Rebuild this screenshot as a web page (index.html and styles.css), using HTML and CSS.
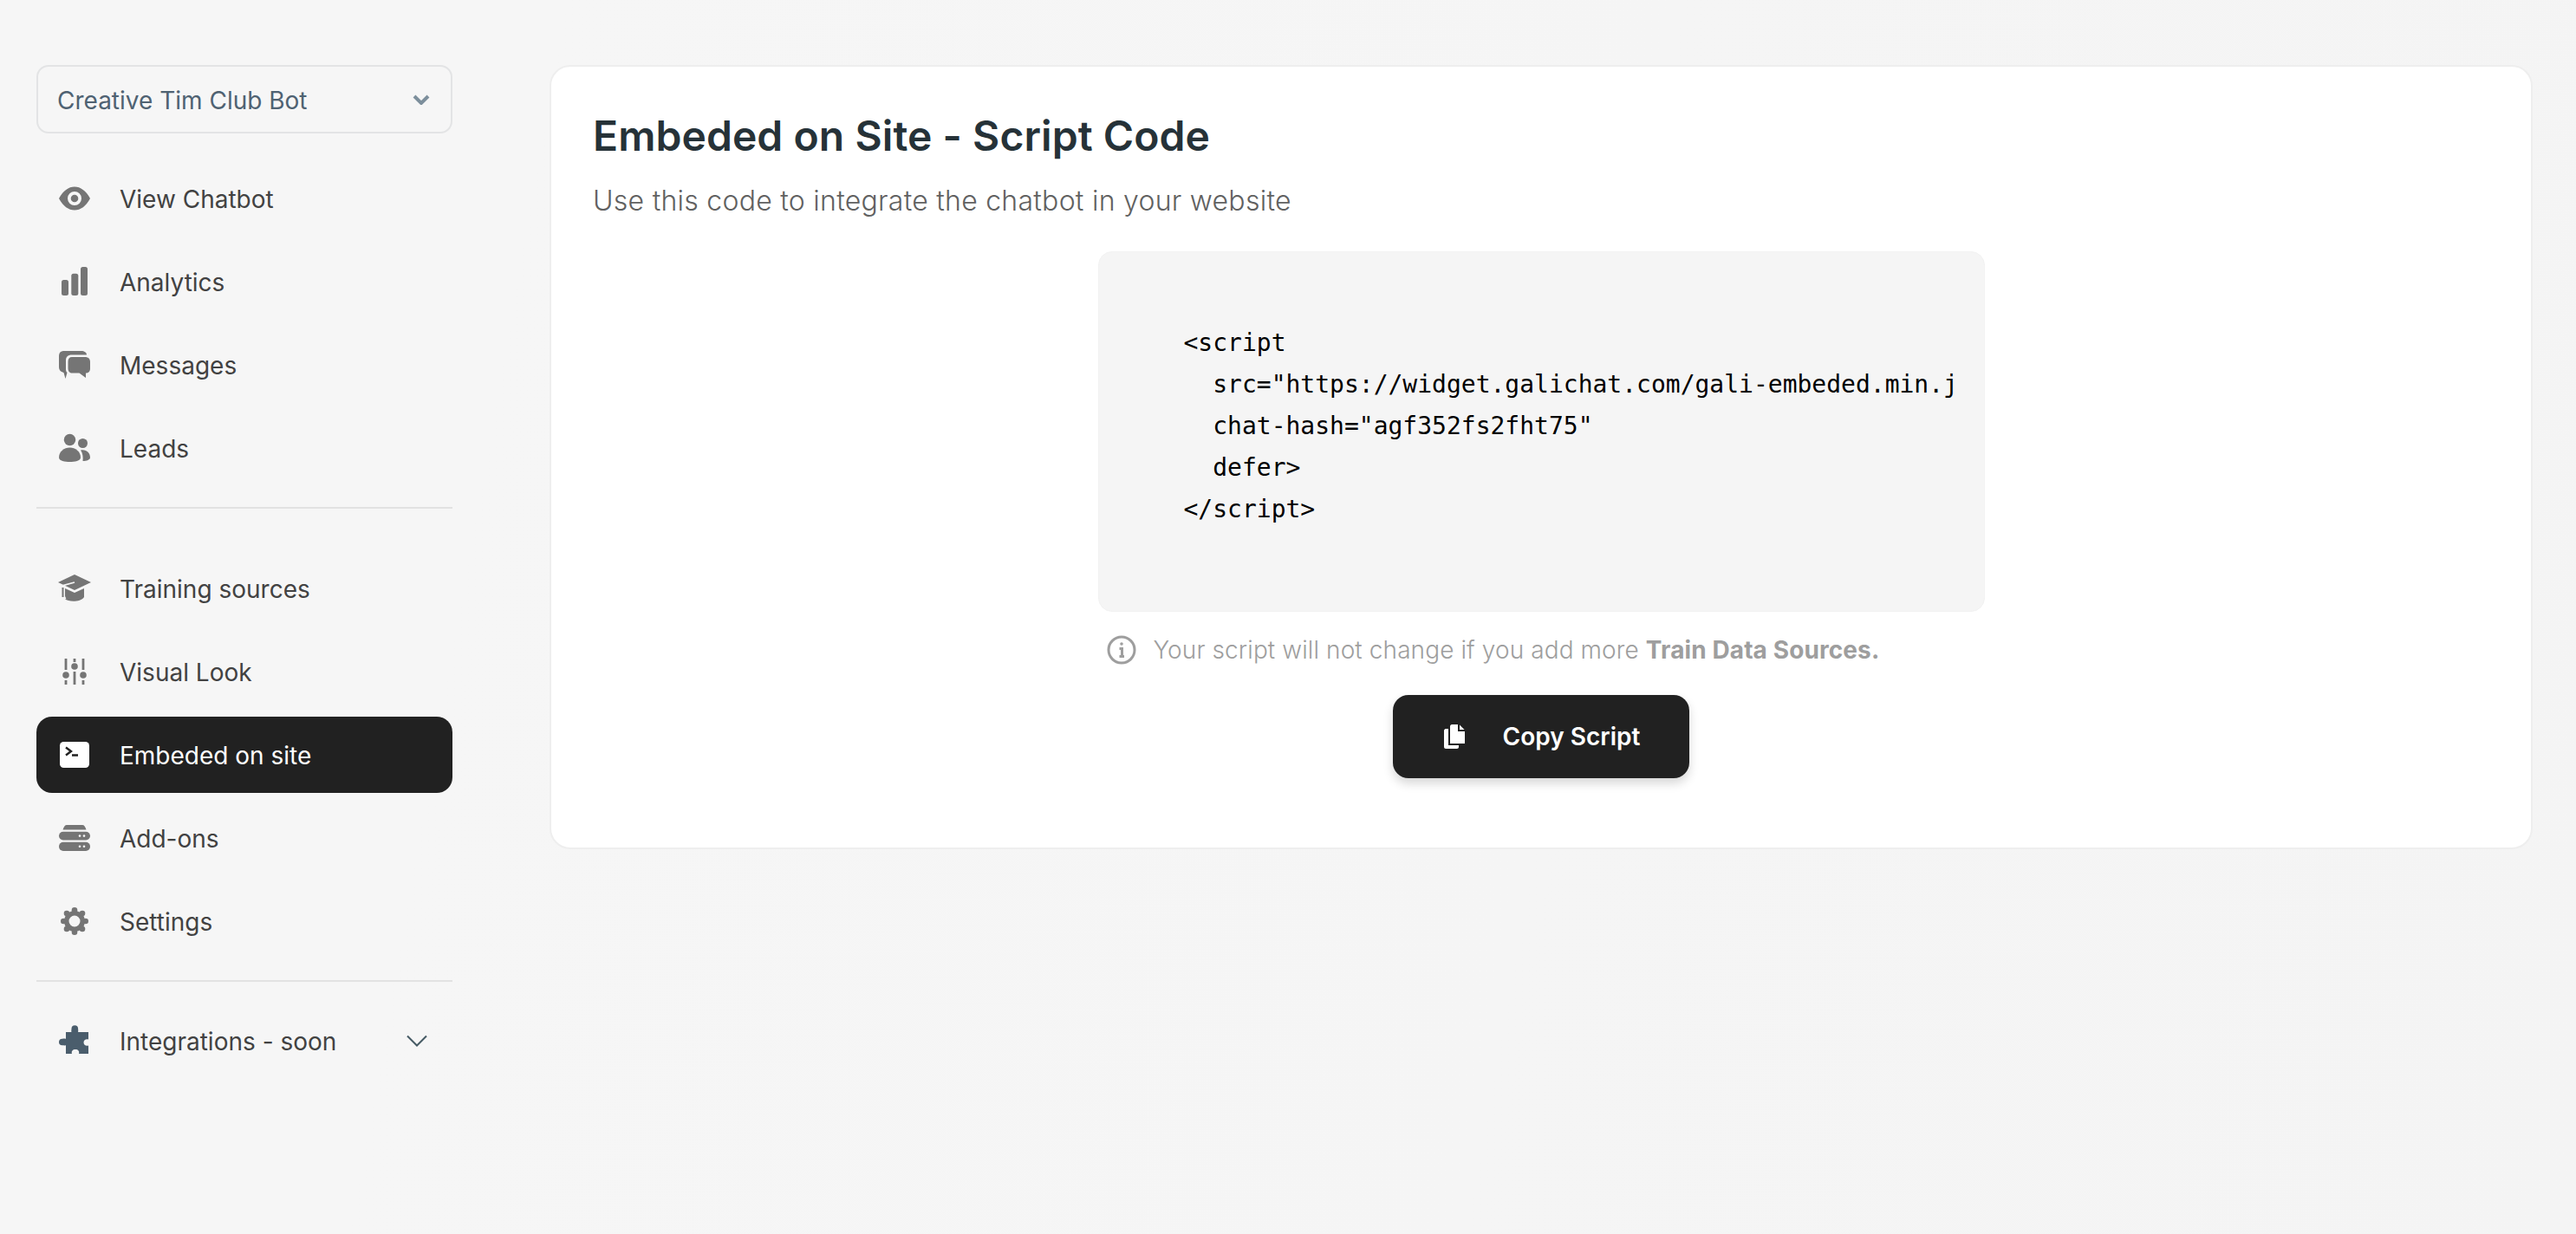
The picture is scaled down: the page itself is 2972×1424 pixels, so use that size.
FILE: index.html
```html
<!DOCTYPE html>
<html lang="en">
<head>
<meta charset="utf-8">
<title>Embeded on Site</title>
<link rel="stylesheet" href="styles.css">
</head>
<body>
<div class="app">
  <aside class="sidebar">
    <div class="select">
      <span class="label">Creative Tim Club Bot</span>
      <svg class="select-chev" viewBox="0 0 20 12"><path d="M2 2l8 8 8-8"/></svg>
    </div>
    <nav class="nav nav-first">
      <a class="item"><svg class="icon" viewBox="0 0 36 36"><path fill-rule="evenodd" d="M0 18C5 9 11 4.500 18 4.500S31 9 36 18C31 27 25 31.500 18 31.500S5 27 0 18ZM18 10a8 8 0 1 0 0 16a8 8 0 1 0 0-16Z"/><circle cx="18" cy="18" r="4.300"/></svg><span class="label">View Chatbot</span></a>
      <a class="item"><svg class="icon" viewBox="0 0 36 36"><rect x="3" y="16" width="8" height="18" rx="2.500"/><rect x="14.300" y="8.700" width="8" height="25.300" rx="2.500"/><rect x="25" y="1" width="8" height="33" rx="2.500"/></svg><span class="label">Analytics</span></a>
      <a class="item"><svg class="icon" viewBox="0 0 36 36"><path d="M6 2H26C29 2 32 3.500 32 6.500H15C10 6.500 8 9 8 13V23C8 25 8.500 26 9.500 27L7.500 34L5.500 27C2 26 0 24 0 20V8C0 4 2 2 6 2Z"/><path d="M15 9H30C34 9 36 11 36 15V22C36 26 34 27.500 31 27.500L31 33L23.500 27.500H15C12 27.500 10.500 25 10.500 22V14C10.500 11 12 9 15 9Z"/></svg><span class="label">Messages</span></a>
      <a class="item"><svg class="icon" viewBox="0 0 36 36"><circle cx="12.500" cy="8.500" r="6.700"/><circle cx="27.500" cy="12.500" r="5.500"/><path d="M0 29C0 22 6 17.500 12.500 17.500S25 22 25 29C25 33 18 34 12.500 34S0 33 0 29Z"/><path d="M25 20.500C31 19 36 23 36 29C36 31.500 32 33 27.500 33C28 29 27.500 24 25 20.500Z"/></svg><span class="label">Leads</span></a>
    </nav>
    <hr class="rule">
    <nav class="nav nav-second">
      <a class="item"><svg class="icon" viewBox="0 0 36 36"><path d="M18 2L37 11L18 20L-1 11Z"/><path d="M7 18L18 23L29 18V28C25 34 11 34 7 30Z"/><path d="M3.500 15V26L1.500 29H7L5.500 26V14.500L18 11" fill="none" stroke="#f6f6f6" stroke-width="1.800"/><path d="M4.500 17V28" stroke="#757575" stroke-width="2" fill="none"/></svg><span class="label">Training sources</span></a>
      <a class="item"><svg class="icon" viewBox="0 0 36 36"><g class="lines"><path d="M8 3V16M8 28V33M18 3V7M18 18V33M28 3V16M28 28V33"/></g><circle cx="8" cy="22" r="3.800"/><circle cx="18" cy="12" r="3.800"/><circle cx="28" cy="22" r="3.800"/></svg><span class="label">Visual Look</span></a>
      <a class="item is-active"><svg class="icon" viewBox="0 0 36 36"><rect x="1" y="3" width="34" height="30" rx="4.500"/><path class="prompt" d="M8 9.500L14 14L8 18.500M15 18.500H22"/></svg><span class="label">Embeded on site</span></a>
      <a class="item"><svg class="icon" viewBox="0 0 36 36"><path d="M9 3H27C29 3 30.500 5 31.500 8.500H4.500C5.500 5 7 3 9 3Z"/><rect y="10.700" width="36" height="9.800" rx="4.900"/><rect y="22.700" width="36" height="10.300" rx="5"/><g class="dots"><circle cx="24" cy="15.600" r="1.300"/><circle cx="29" cy="15.600" r="1.300"/><circle cx="24" cy="27.800" r="1.300"/><circle cx="29" cy="27.800" r="1.300"/></g></svg><span class="label">Add-ons</span></a>
      <a class="item"><svg class="icon" viewBox="0 0 36 36"><path fill-rule="evenodd" d="M18 6a12 12 0 1 0 0 24a12 12 0 1 0 0-24ZM18 11.500a6.500 6.500 0 1 1 0 13a6.500 6.500 0 1 1 0-13Z"/><circle cx="18" cy="5.300" r="3.300"/><circle cx="27" cy="9" r="3.300"/><circle cx="30.700" cy="18" r="3.300"/><circle cx="27" cy="27" r="3.300"/><circle cx="18" cy="30.700" r="3.300"/><circle cx="9" cy="27" r="3.300"/><circle cx="5.300" cy="18" r="3.300"/><circle cx="9" cy="9" r="3.300"/></svg><span class="label">Settings</span></a>
    </nav>
    <hr class="rule">
    <a class="item item-soon"><svg class="icon icon-slate" viewBox="0 0 36 36"><path fill-rule="evenodd" d="M8 8H14.500C14 7 14.500 5.500 14.500 4a3.800 3.800 0 1 1 7.600 0C22.100 5.500 22.500 7 22 8H34V16.500C31 15.500 28.500 17.500 28.500 20S31 24.500 34 23.500V33H23C24 30 22 28 19 28S14 30 15 33H8V23C7 24 5.500 23.300 3.800 23.300a3.800 3.800 0 1 1 0-7.600C5.500 15.700 7 15 8 16Z"/></svg><span class="label">Integrations - soon</span><svg class="soon-chev" viewBox="0 0 24 14"><path d="M1 1.500L12 12.500L23 1.500"/></svg></a>
  </aside>
  <main class="card">
    <h1 class="title">Embeded on Site - Script Code</h1>
    <p class="subtitle">Use this code to integrate the chatbot in your website</p>
    <section class="center">
      <div class="codebox">
        <pre class="code">&lt;script
  src="https://widget.galichat.com/gali-embeded.min.js"
  chat-hash="agf352fs2fht75"
  defer&gt;
&lt;/script&gt;</pre>
      </div>
      <p class="note">
        <svg class="info" viewBox="0 0 34 34"><circle cx="17" cy="17" r="15"/><path d="M14.500 15.500H17.500V24.500M14.500 24.500H20"/><circle class="info-dot" cx="17" cy="10" r="1.800"/></svg>
        <span>Your script will not change if you add more <b>Train Data Sources.</b></span>
      </p>
      <button class="copy">
        <svg class="copy-icon" viewBox="0 0 24 28"><path d="M9 0H16V8H24V22H7V2C7 1 8 0 9 0Z"/><path d="M18 .5L23.500 6H18Z"/><path d="M0 7C0 6 1 5 2 5H5V24H17V26C17 27 16 28 15 28H2C1 28 0 27 0 26Z"/></svg>
        <span>Copy Script</span>
      </button>
    </section>
  </main>
</div>
</body>
</html>
```

FILE: styles.css
```css
* { box-sizing: border-box; }
html, body { margin: 0; padding: 0; }
body {
  background: linear-gradient(100deg, #f6f6f6 0%, #f6f6f6 20%, #f4f4f4 100%);
  font-family: Inter, "Noto Sans", sans-serif;
  width: 2972px;
  height: 1424px;
  overflow: hidden;
}
.app {
  display: flex;
  align-items: flex-start;
  padding: 75px 50px 0 42px;
  gap: 112px;
}
.sidebar { width: 480px; flex: none; }
.label { padding-top: 2px; }
.select {
  height: 79px;
  border: 2px solid #e3e4e5;
  border-radius: 14px;
  padding: 0 24px 0 22px;
  display: flex;
  align-items: center;
  justify-content: space-between;
  font-size: 28px;
  color: #4f6272;
}
.select-chev { width: 20px; height: 12px; fill: none; stroke: #7d8f9c; stroke-width: 4; }
.nav { display: flex; flex-direction: column; gap: 8px; }
.nav-first { margin-top: 31px; }
.nav-second { margin-top: 48px; }
.rule { border: 0; height: 2px; background: #e2e2e2; margin: 24px 0 0; }
.item {
  height: 88px;
  display: flex;
  align-items: center;
  gap: 34px;
  padding: 0 26px;
  border-radius: 18px;
  color: #424242;
  font-size: 28px;
}
.item-soon { margin-top: 24px; }
.icon { width: 36px; height: 36px; flex: none; fill: #757575; overflow: visible; }
.icon-slate { fill: #4a5d6c; }
.lines path { stroke: #757575; stroke-width: 2.800; fill: none; }
.dots circle { fill: #f6f6f6; }
.is-active { background: #212121; color: #fff; }
.is-active .icon { fill: #fff; }
.prompt { fill: none; stroke: #212121; stroke-width: 2.400; }
.soon-chev {
  width: 24px;
  height: 14px;
  margin-left: auto;
  margin-right: 3px;
  fill: none;
  stroke: #455a64;
  stroke-width: 2;
}
.card {
  flex: 1;
  height: 905px;
  background: #fff;
  border: 2px solid #eeeeee;
  border-radius: 24px;
  padding: 48px 48px 0;
}
.title {
  margin: 0;
  font-size: 48px;
  line-height: 64px;
  font-weight: 600;
  letter-spacing: 0.07px;
  color: #263238;
}
.subtitle {
  margin: 21px 0 0;
  font-size: 32px;
  line-height: 44px;
  font-weight: 300;
  letter-spacing: 0.26px;
  color: #616161;
}
.center {
  width: 1023px;
  margin: 36px auto 0;
  display: flex;
  flex-direction: column;
  align-items: center;
}
.codebox {
  width: 100%;
  height: 416px;
  background: #f5f5f5;
  border-radius: 16px;
  border: 1px solid #f2f2f2;
  padding: 81px 34px 0 98px;
}
.code {
  margin: 0;
  overflow: hidden;
  font-family: "DejaVu Sans Mono", monospace;
  font-size: 28px;
  line-height: 48px;
  color: #000;
}
.note {
  align-self: flex-start;
  display: flex;
  align-items: center;
  gap: 20px;
  margin: 22px 0 0 10px;
  height: 44px;
  font-size: 28px;
  font-weight: 300;
  letter-spacing: 0.1px;
  color: #9e9e9e;
}
.note b { font-weight: 700; }
.info { width: 34px; height: 34px; fill: none; stroke: #9e9e9e; stroke-width: 3; }
.info-dot { fill: #9e9e9e; stroke: none; }
.copy {
  margin-top: 30px;
  width: 342px;
  height: 96px;
  border: 0;
  border-radius: 18px;
  background: #212121;
  color: #fff;
  font-family: inherit;
  font-size: 28px;
  font-weight: 600;
  display: flex;
  align-items: center;
  justify-content: center;
  gap: 44px;
  padding: 0 0 0 2px;
  box-shadow: 0 6px 12px rgba(0, 0, 0, 0.16);
}
.copy-icon { width: 24px; height: 28px; fill: #fff; }
```
